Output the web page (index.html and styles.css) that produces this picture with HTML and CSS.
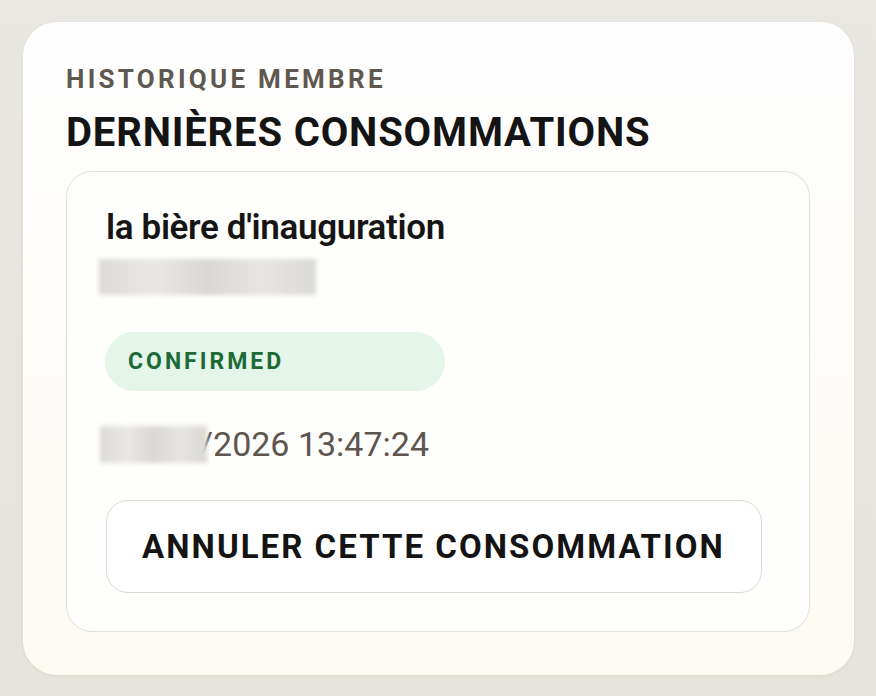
FILE: index.html
```html
<!DOCTYPE html>
<html lang="fr">
<head>
<meta charset="utf-8">
<title>Historique membre</title>
<link rel="stylesheet" href="styles.css">
</head>
<body>
<section class="card">
  <p class="eyebrow">HISTORIQUE MEMBRE</p>
  <h2 class="title">DERNIÈRES CONSOMMATIONS</h2>
  <article class="entry">
    <h3 class="entry-name">la bière d'inauguration</h3>
    <div class="redacted redacted-sub"></div>
    <span class="badge">CONFIRMED</span>
    <p class="date"><span class="redacted redacted-date"></span><span class="date-text">/2026 13:47:24</span></p>
    <button class="cancel" type="button">ANNULER CETTE CONSOMMATION</button>
  </article>
</section>
</body>
</html>
```

FILE: styles.css
```css
* { box-sizing: border-box; }
html, body { height: 100%; }
body {
  margin: 0;
  padding: 22px 22px 21px 23px;
  background: linear-gradient(180deg, #e9e7e2 0%, #e6e2dc 100%);
  font-family: Roboto, "Noto Sans", "Liberation Sans", sans-serif;
  color: #151515;
}
.card {
  width: 831px;
  height: 653px;
  border-radius: 34px;
  background: linear-gradient(180deg, #fefefe 0%, #fdfaf3 100%);
  box-shadow: 0 1px 3px rgba(120, 100, 60, 0.08);
  padding: 44px 44px 43px 43px;
  display: flex;
  flex-direction: column;
}
.eyebrow {
  margin: 0;
  font-size: 26px;
  line-height: 26px;
  font-weight: 700;
  letter-spacing: 0.126em;
  color: #5f5850;
}
.title {
  margin: 21px 0 0;
  font-size: 40px;
  line-height: 40px;
  font-weight: 700;
  letter-spacing: 0.021em;
  color: #141414;
}
.entry {
  margin-top: 18px;
  flex: 1;
  border: 1.5px solid #e4e1dc;
  border-radius: 26px;
  background: #fefefd;
  padding: 36px 40px 38px 39px;
  display: flex;
  flex-direction: column;
  align-items: flex-start;
}
.entry-name {
  margin: 0;
  font-size: 35px;
  line-height: 40px;
  font-weight: 600;
  letter-spacing: -0.01em;
  color: #151515;
}
.redacted {
  display: block;
  background: linear-gradient(90deg, #dcdad7 0%, #e9e8e5 25%, #d9d7d4 50%, #e6e5e2 75%, #dbd9d6 100%);
  filter: blur(2px);
}
.redacted-sub {
  margin: 11px 0 0 -7px;
  width: 217px;
  height: 36px;
}
.badge {
  margin: 37px 0 0 -1px;
  width: 340px;
  height: 59px;
  border-radius: 30px;
  background: #e4f5ea;
  color: #1d6a37;
  font-size: 23px;
  font-weight: 700;
  letter-spacing: 0.13em;
  display: flex;
  align-items: center;
  padding-left: 23px;
}
.date {
  margin: 35px 0 0 -6px;
  display: flex;
  align-items: center;
  font-size: 34px;
  line-height: 37px;
  color: #5d554e;
}
.redacted-date {
  width: 107px;
  height: 37px;
  margin-right: -8px;
  position: relative;
  z-index: 1;
}
.cancel {
  margin-top: 37px;
  height: 93px;
  padding: 0 36px 0 35px;
  border: 1.5px solid #dedbd6;
  border-radius: 22px;
  background: #ffffff;
  font-family: Roboto, "Noto Sans", "Liberation Sans", sans-serif;
  font-size: 33px;
  font-weight: 700;
  letter-spacing: 0.062em;
  color: #141414;
}
```
